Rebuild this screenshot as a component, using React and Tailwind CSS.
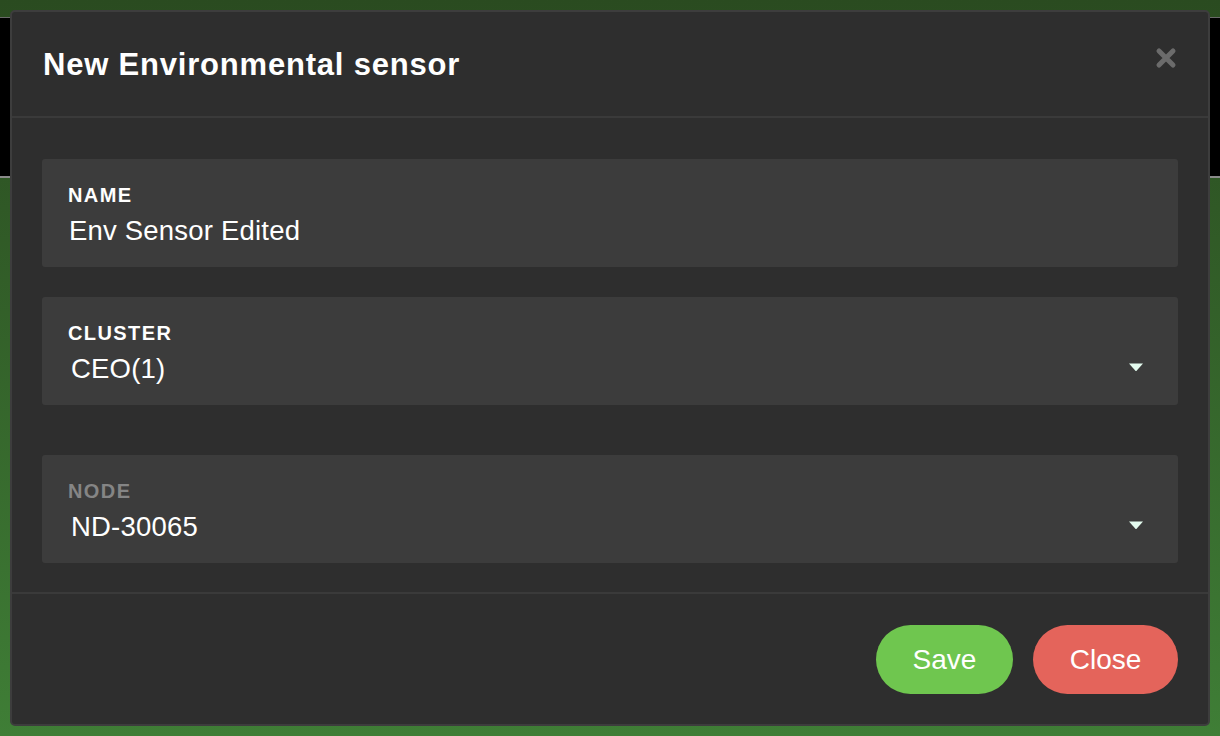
import React from "react";

function Caret() {
  return (
    <svg width="16" height="9" viewBox="0 0 16 9" className="shrink-0">
      <path d="M1 0.5 H15 L8.6 7.8 Q8 8.4 7.4 7.8 Z" fill="#e4fbef" />
    </svg>
  );
}

function Field({ label, value, muted, select }) {
  return (
    <div className="h-[108px] rounded-[3px] bg-[#3c3c3c] pl-[26px] pr-[34px] pt-[25px] flex items-start justify-between">
      <div className="flex flex-col">
        <div
          className={`h-[22px] leading-[22px] text-[20px] font-bold tracking-[1.4px] ${
            muted ? "text-[#858585]" : "text-white"
          }`}
        >
          {label}
        </div>
        <div
          className={`mt-[10px] h-[30px] leading-[30px] text-[27.5px] text-white tracking-[0.2px] ${
            select ? "pl-[3px]" : "pl-[1px]"
          }`}
        >
          {value}
        </div>
      </div>
      {select && (
        <div className="mt-[41px]">
          <Caret />
        </div>
      )}
    </div>
  );
}

export default function App() {
  return (
    <div
      className="relative w-[1220px] h-[736px] overflow-hidden bg-gradient-to-b from-[#2a4b20] to-[#3f7e36]"
      style={{ fontFamily: '"Liberation Sans", Arial, sans-serif' }}
    >
      {/* page header band behind the modal */}
      <div className="absolute left-0 right-0 top-[17px] h-[161px] bg-black border-t border-[#6a6a6a] border-b-2 border-b-[#8a8a8a]" />

      {/* modal */}
      <div className="absolute left-[10px] top-[10px] w-[1200px] h-[716px] rounded-[5px] border-2 border-[#3d3d3d] bg-[#2e2e2e] flex flex-col">
        <div className="h-[106px] border-b-2 border-[#3a3a3a] flex items-center justify-between pl-[31px] pr-[31px]">
          <h1 className="text-[31px] font-bold text-white tracking-[0.8px] leading-none pt-[1px]">
            New Environmental sensor
          </h1>
          <svg width="22" height="22" viewBox="0 0 22 22" className="mb-[12px]">
            <path
              d="M4 4 L18 18 M18 4 L4 18"
              stroke="#6b6b6b"
              strokeWidth="5"
              strokeLinecap="round"
            />
          </svg>
        </div>

        <div className="flex-1 px-[30px] pt-[41px] flex flex-col">
          <Field label="NAME" value="Env Sensor Edited" />
          <div className="h-[30px]" />
          <Field label="CLUSTER" value="CEO(1)" select />
          <div className="h-[50px]" />
          <Field label="NODE" value="ND-30065" muted select />
        </div>

        <div className="h-[132px] border-t-2 border-[#3a3a3a] flex items-start justify-end gap-[20px] pr-[30px] pt-[31px]">
          <button className="w-[137px] h-[69px] rounded-full bg-[#6fc64f] text-white text-[28px]">
            Save
          </button>
          <button className="w-[145px] h-[69px] rounded-full bg-[#e4645b] text-white text-[28px]">
            Close
          </button>
        </div>
      </div>
    </div>
  );
}
